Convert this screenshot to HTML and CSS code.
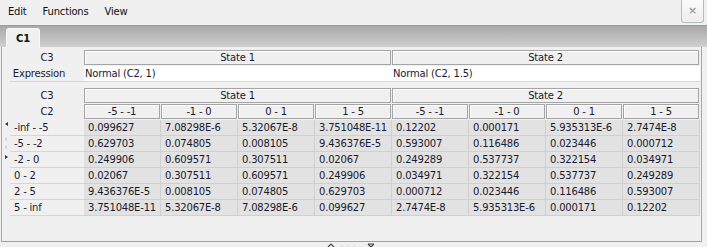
FILE: index.html
```html
<!DOCTYPE html>
<html lang="en">

<head>
    <meta charset="UTF-8" />
    <title>C1 | Conditional Table</title>
    <link rel="stylesheet" href="styles.css">
</head>

<body>

    <div class="menubar">
        <span class="menu-item">Edit</span>
        <span class="menu-item">Functions</span>
        <span class="menu-item">View</span>
        <div class="close-btn">&#215;</div>
    </div>

    <div class="tabstrip">
        <div class="tab">C1</div>
    </div>

    <div class="panel">

        <!-- expression table -->
        <div class="grid expr-grid">
            <div class="lbl">C3</div>
            <div class="hd">State 1</div>
            <div class="hd">State 2</div>
            <div class="lbl lbl-expr">Expression</div>
            <div class="val">Normal (C2, 1)</div>
            <div class="val">Normal (C2, 1.5)</div>
        </div>

        <!-- probability table -->
        <div class="data-wrap">
            <svg class="scroll-marks" width="8" height="48" viewBox="0 0 8 48">
                <path d="M5 1 L2 3 L5 5 Z" fill="#333" />
                <path d="M2 18 L4 17 M2 19 L4 19" stroke="#c8c8c8" stroke-width="1" />
                <path d="M2 26 L4 25 M2 27 L4 27" stroke="#c8c8c8" stroke-width="1" />
                <path d="M2 34 L5 36 L2 38 Z" fill="#333" />
            </svg>
            <div class="grid data-grid" id="data-grid"></div>
        </div>

    </div>

    <div class="pager">
        <svg width="60" height="4" viewBox="0 0 60 4">
            <path d="M4 4 L7 1 L10 4" fill="none" stroke="#444" stroke-width="1.2" />
            <path d="M17 4 L19 2 M23 4 L25 2 M29 4 L31 2" stroke="#d0d0d0" stroke-width="1" />
            <path d="M44 1 L47 4 L50 1 M44 1 L50 1" fill="none" stroke="#444" stroke-width="1.2" />
        </svg>
    </div>

    <script>
        const COLS = ["-5 - -1", "-1 - 0", "0 - 1", "1 - 5"];
        const ROWS = [
            ["-inf - -5", "0.099627", "7.08298E-6", "5.32067E-8", "3.751048E-11", "0.12202", "0.000171", "5.935313E-6", "2.7474E-8"],
            ["-5 - -2", "0.629703", "0.074805", "0.008105", "9.436376E-5", "0.593007", "0.116486", "0.023446", "0.000712"],
            ["-2 - 0", "0.249906", "0.609571", "0.307511", "0.02067", "0.249289", "0.537737", "0.322154", "0.034971"],
            ["0 - 2", "0.02067", "0.307511", "0.609571", "0.249906", "0.034971", "0.322154", "0.537737", "0.249289"],
            ["2 - 5", "9.436376E-5", "0.008105", "0.074805", "0.629703", "0.000712", "0.023446", "0.116486", "0.593007"],
            ["5 - inf", "3.751048E-11", "5.32067E-8", "7.08298E-6", "0.099627", "2.7474E-8", "5.935313E-6", "0.000171", "0.12202"]
        ];

        let html = `<div class="lbl">C3</div><div class="hd span4">State 1</div><div class="hd span4">State 2</div>`;
        html += `<div class="lbl">C2</div>` + [...COLS, ...COLS].map(c => `<div class="hd">${c}</div>`).join('');
        html += ROWS.map(r => `<div class="lbl row-lbl">${r[0]}</div>` +
            r.slice(1).map(v => `<div class="cell">${v}</div>`).join('')).join('');
        document.getElementById('data-grid').innerHTML = html;
    </script>

</body>

</html>
```

FILE: styles.css
```css
:root {
    --bg: #f0f0f0;
    --text: #1a1a2e;
    --hd-border: #a4a4a4;
    --cell-bg: #e2e2e2;
    --cell-line: #d0d0d0;
    --lbl-line: #d6d6d6;
}

* {
    box-sizing: border-box
}

body {
    margin: 0;
    width: 707px;
    height: 247px;
    overflow: hidden;
    background: var(--bg);
    color: var(--text);
    font-family: "DejaVu Sans", Verdana, sans-serif;
    font-size: 10px;
    letter-spacing: -0.2px;
}

/* ---------- MENU ---------- */
.menubar {
    display: flex;
    align-items: flex-start;
    gap: 16px;
    height: 25px;
    padding-left: 8px;
}

.menu-item {
    line-height: 24px;
    color: #111;
}

.close-btn {
    margin-left: auto;
    margin-right: 3px;
    width: 23px;
    height: 23px;
    border: 1px solid #b4bcbc;
    border-top: none;
    border-radius: 0 0 3px 3px;
    background: linear-gradient(#fbfbfb, #eeeeee);
    color: #a0a0a0;
    font-size: 11px;
    font-weight: bold;
    text-align: center;
    line-height: 22px;
}

/* ---------- TABS ---------- */
.tabstrip {
    height: 22px;
    border-top: 1px solid #9a9a9a;
    background: linear-gradient(#a8a8a8, #cfcfcf);
    padding: 2px 0 0 6px;
}

.tab {
    width: 34px;
    height: 20px;
    background: var(--bg);
    border: 1px solid #f8f8f8;
    border-bottom: none;
    border-radius: 3px 3px 0 0;
    font-weight: bold;
    text-align: center;
    line-height: 19px;
    color: #111;
}

/* ---------- PANEL ---------- */
.panel {
    height: 195px;
    margin: 0 5px 0 1px;
    border-left: 1px solid #a8a8a8;
    border-right: 1px solid #a8a8a8;
    border-bottom: 1px solid #a0a0a0;
    padding-top: 3px;
}

.grid {
    display: grid;
}

.expr-grid {
    grid-template-columns: 82px repeat(2, 308px);
    margin-bottom: 6px;
}

.data-grid {
    grid-template-columns: 82px repeat(8, 77px);
}

.data-wrap {
    position: relative;
}

.scroll-marks {
    position: absolute;
    left: 1px;
    top: 33px;
}

.lbl {
    margin-left: 8px;
    height: 16px;
    line-height: 15px;
    text-align: center;
}

.lbl-expr {
    padding-right: 16px;
    border-bottom: 1px solid var(--lbl-line);
}

.row-lbl {
    text-align: left;
    padding-left: 4px;
    border-bottom: 1px solid var(--lbl-line);
}

.hd {
    height: 15px;
    margin: 0 1px 1px 0;
    border: 1px solid var(--hd-border);
    box-shadow: inset 1px 1px #fff;
    background: var(--bg);
    text-align: center;
    line-height: 13px;
}

.span4 {
    grid-column: span 4;
}

.val {
    height: 16px;
    background: #fff;
    border-bottom: 1px solid var(--lbl-line);
    padding-left: 1px;
    line-height: 15px;
}

.cell {
    height: 16px;
    background: var(--cell-bg);
    border-right: 1px solid var(--cell-line);
    border-bottom: 1px solid var(--cell-line);
    padding-left: 4px;
    line-height: 15px;
}

/* ---------- BOTTOM ---------- */
.pager {
    display: flex;
    justify-content: center;
    padding: 1px 0 0 0;
}
```
